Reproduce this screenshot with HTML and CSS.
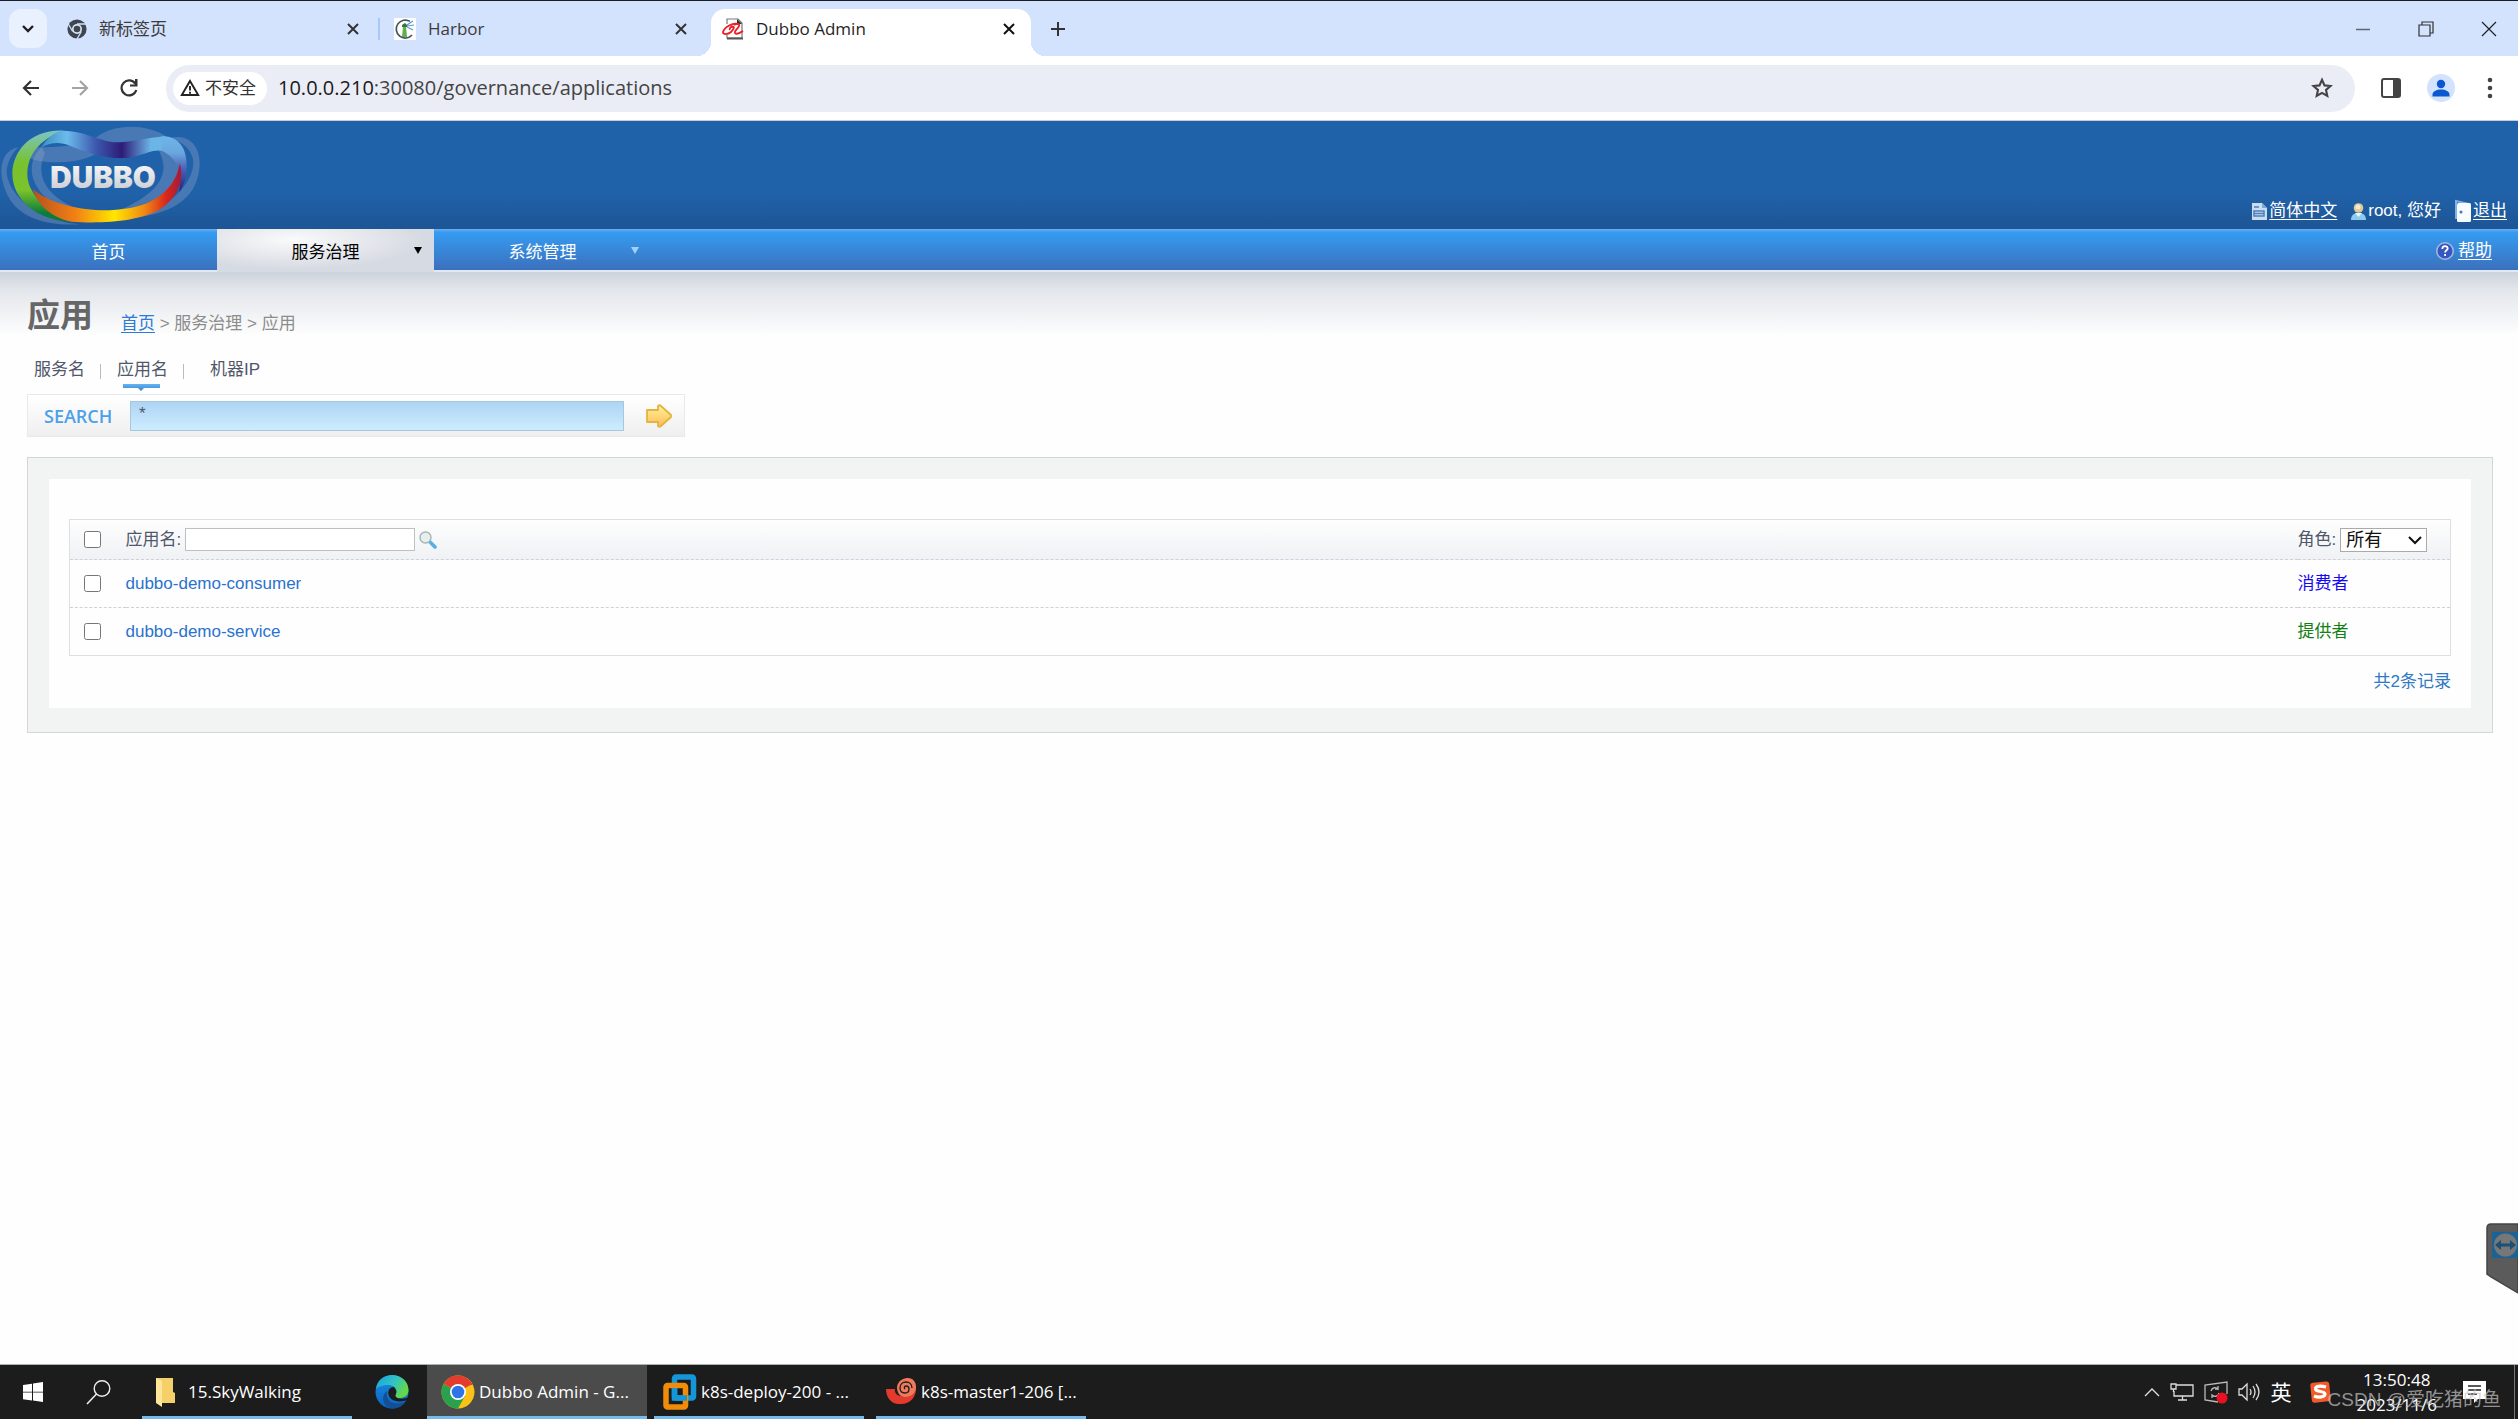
FILE: index.html
```html
<!DOCTYPE html>
<html lang="zh-CN">
<head>
    <meta charset="UTF-8">
    <title>Dubbo Admin</title>
    <link rel="stylesheet" href="styles.css">
</head>
<body>
<!-- 标签栏 -->
<div class="tabstrip">
    <button class="tab-search" aria-label="搜索标签页">
        <svg width="14" height="10" viewBox="0 0 14 10"><path d="M2 2l5 5 5-5" fill="none" stroke="#1f1f1f" stroke-width="2.4"/></svg>
    </button>
    <div class="tab tab-first">
        <svg class="favicon" width="20" height="20" viewBox="0 0 20 20">
            <circle cx="10" cy="10" r="9.6" fill="#3f464e"/>
            <circle cx="10" cy="10" r="5" fill="#d3e2fd"/>
            <circle cx="10" cy="10" r="3.3" fill="#3f464e"/>
            <path d="M10 5h9M5.7 12.5L1.3 5M14.3 12.5L10 20" stroke="#d3e2fd" stroke-width="1.3"/>
        </svg>
        <span class="tab-title">新标签页</span>
        <button class="icon-btn" aria-label="关闭"><svg width="12" height="12" viewBox="0 0 12 12"><path d="M1 1l10 10M11 1L1 11" stroke="#333" stroke-width="2"/></svg></button>
    </div>
    <div class="tab tab-second">
        <svg class="favicon" width="22" height="22" viewBox="0 0 22 22">
            <rect width="22" height="22" fill="#fff"/>
            <path d="M16 3.4A9 9 0 1 0 18 17" fill="none" stroke="#46535c" stroke-width="1.7"/>
            <path d="M8 19l1-11h3l1 11z" fill="#60b14b"/>
            <path d="M8 7l3-2 2 2v2H8z" fill="#39733a"/>
            <path d="M13 7l6-4M13 8l7-1M13 9l6 3" stroke="#5b9bd5" stroke-width="1.2"/>
        </svg>
        <span class="tab-title">Harbor</span>
        <button class="icon-btn" aria-label="关闭"><svg width="12" height="12" viewBox="0 0 12 12"><path d="M1 1l10 10M11 1L1 11" stroke="#333" stroke-width="2"/></svg></button>
    </div>
    <div class="tab tab-active">
        <svg class="favicon" width="22" height="22" viewBox="0 0 22 22">
            <path d="M5 6V1h11l4 4v15H5v-3" fill="#fff" stroke="#777" stroke-width="1.2"/>
            <path d="M15 1v5h5" fill="#333"/>
            <path d="M5 20.5h16" stroke="#555" stroke-width="2"/>
            <path d="M17 6C10 4 2 10 1 14c-.5 3 5 2.500 8 0 2-2 4-5 2-5.500-2 0-4 2-3 3.500" fill="none" stroke="#ee1c25" stroke-width="1.8"/>
            <path d="M12 7c4-2 6-1 5 1-1 3-5 5-4 7 1 1.500 5 0 8-2" fill="none" stroke="#ee1c25" stroke-width="1.8"/>
        </svg>
        <span class="tab-title">Dubbo Admin</span>
        <button class="icon-btn" aria-label="关闭"><svg width="12" height="12" viewBox="0 0 12 12"><path d="M1 1l10 10M11 1L1 11" stroke="#111" stroke-width="2"/></svg></button>
    </div>
    <button class="icon-btn new-tab" aria-label="新建标签页"><svg width="14" height="14" viewBox="0 0 14 14"><path d="M7 0v14M0 7h14" stroke="#333" stroke-width="2"/></svg></button>
    <div class="win-ctrl">
        <button class="icon-btn" aria-label="最小化"><svg width="16" height="16" viewBox="0 0 16 16"><path d="M1 8.5h14" stroke="#5f6670" stroke-width="1.5"/></svg></button>
        <button class="icon-btn" aria-label="还原"><svg width="16" height="16" viewBox="0 0 16 16"><path d="M1 4h11v11H1zM4 4V1h11v11h-3" fill="none" stroke="#333" stroke-width="1.2"/></svg></button>
        <button class="icon-btn" aria-label="关闭窗口"><svg width="16" height="16" viewBox="0 0 16 16"><path d="M1 1l14 14M15 1L1 15" stroke="#222" stroke-width="1.2"/></svg></button>
    </div>
</div>

<!-- 地址栏 -->
<div class="toolbar">
    <button class="icon-btn" aria-label="后退"><svg width="18" height="16" viewBox="0 0 18 16"><path d="M17 8H2M9 1L2 8l7 7" fill="none" stroke="#333" stroke-width="2.2"/></svg></button>
    <button class="icon-btn" aria-label="前进"><svg width="18" height="16" viewBox="0 0 18 16"><path d="M1 8h15M9 1l7 7-7 7" fill="none" stroke="#a3a3a3" stroke-width="2.2"/></svg></button>
    <button class="icon-btn" aria-label="刷新"><svg width="18" height="18" viewBox="0 0 18 18"><path d="M15.5 5A7.5 7.5 0 1 0 16.3 11" fill="none" stroke="#333" stroke-width="2.2"/><path d="M17.5 0v7.500H10V5.500h5V0z" fill="#333"/></svg></button>
    <div class="omnibox">
        <button class="site-chip">
            <svg width="20" height="18" viewBox="0 0 20 18"><path d="M10 2L18.2 16H1.800z" fill="none" stroke="#222" stroke-width="1.9"/><path d="M10 7v4.500M10 12.700v2" stroke="#222" stroke-width="1.9"/></svg>
            不安全
        </button>
        <div class="url"><span class="host">10.0.0.210</span>:30080/governance/applications</div>
        <button class="icon-btn" aria-label="收藏"><svg width="22" height="22" viewBox="0 0 22 22"><path d="M11 2.800l2.500 5.600 6 .6-4.500 4 1.300 6L11 15.900 5.700 19 7 13 2.500 9l6-.6z" fill="none" stroke="#444" stroke-width="2.1"/></svg></button>
    </div>
    <button class="icon-btn" aria-label="侧边栏"><svg width="20" height="20" viewBox="0 0 20 20"><rect x="1" y="1" width="18" height="18" rx="2" fill="#fff" stroke="#444" stroke-width="2"/><path d="M12 1h7v18h-7z" fill="#444"/></svg></button>
    <button class="icon-btn" aria-label="用户"><svg width="28" height="28" viewBox="0 0 28 28"><circle cx="14" cy="14" r="14" fill="#d3e2fd"/><circle cx="14" cy="10" r="4.2" fill="#0b57d0"/><path d="M5.500 22.500v-2c0-3 4-5 8.500-5s8.500 2 8.500 5v2z" fill="#0b57d0"/></svg></button>
    <button class="icon-btn more" aria-label="更多"><svg width="6" height="22" viewBox="0 0 6 22"><g fill="#444"><circle cx="3" cy="3" r="2.3"/><circle cx="3" cy="11" r="2.3"/><circle cx="3" cy="19" r="2.3"/></g></svg></button>
</div>

<!-- 页头 -->
<header class="header">
    <svg class="logo" width="200" height="108" viewBox="0 33 600 324" role="img" aria-label="DUBBO">
        <defs>
            <linearGradient id="green" x1="0" y1="0" x2="0" y2="1"><stop offset="0" stop-color="#7cc4c8"/><stop offset=".35" stop-color="#78c22e"/><stop offset=".65" stop-color="#7cc32c"/><stop offset=".9" stop-color="#0d7c3b"/></linearGradient>
            <linearGradient id="blue" x1="0" y1="0" x2="1" y2="0"><stop offset="0" stop-color="#3a8cc0"/><stop offset=".2" stop-color="#6cbbec"/><stop offset=".42" stop-color="#3c59ae"/><stop offset=".62" stop-color="#2d1c78"/><stop offset=".84" stop-color="#6bb4e6"/><stop offset="1" stop-color="#6db6e8"/></linearGradient>
            <linearGradient id="warm" x1="0" y1="0" x2="1" y2="0"><stop offset="0" stop-color="#b8501e"/><stop offset=".28" stop-color="#f07f14"/><stop offset=".55" stop-color="#ffe600"/><stop offset=".75" stop-color="#f08a14"/><stop offset=".9" stop-color="#d9261c"/><stop offset="1" stop-color="#a01c3a"/></linearGradient>
            <linearGradient id="silver" x1="0" y1="0" x2="0" y2="1"><stop offset="0" stop-color="#fff"/><stop offset="1" stop-color="#c4c6ca"/></linearGradient>
            <linearGradient id="tail" x1="0" y1="0" x2="0" y2="1"><stop offset="0" stop-color="#6db6e8"/><stop offset=".3" stop-color="#6aa6de"/><stop offset=".6" stop-color="#4a5fb4"/><stop offset="1" stop-color="#2c1c78"/></linearGradient>
        </defs>
        <g fill="#8fa3cb" fill-opacity=".36">
            <path d="M55 112C5 120-10 180 18 245 48 320 130 348 240 343 130 335 30 270 20 190 20 160 35 130 55 112z"/>
            <path d="M85 112C150 112 220 115 290 82 340 40 440 40 500 80 430 110 330 100 280 136 220 165 120 160 90 145z"/>
            <path d="M510 84C560 72 600 100 599 165 594 250 540 310 390 325 490 300 570 240 580 165 582 130 560 100 510 84z"/>
            <path d="M470 110C500 160 520 230 360 300 480 280 540 230 540 160 535 125 510 110 470 110z"/>
            <path d="M125 112C80 150 75 240 190 298L240 300C120 255 110 180 135 130z"/>
        </g>
        <path d="M190 62C90 58 38 125 37 190 37 270 110 332 220 336 150 305 84 260 82 195 82 135 115 90 190 62z" fill="url(#green)"/>
        <path d="M190 62C160 64 140 88 122 114 150 96 180 94 210 107 260 128 320 150 390 143 430 136 460 114 495 124L515 88C505 80 495 78 480 80 430 85 390 98 340 97 290 90 250 62 190 62z" fill="url(#blue)"/>
        <path d="M485 79C530 76 562 110 560 170 560 205 552 225 538 246 545 190 535 145 485 122z" fill="url(#tail)"/>
        <path d="M98 236C150 284 260 305 340 300 430 295 520 262 540 160 552 215 535 262 480 298 420 335 300 342 215 335 150 322 110 280 98 236z" fill="url(#warm)"/>
        <text x="151" y="234" class="logo-text" fill="url(#silver)">DUBBO</text>
    </svg>
    <div class="user-links">
        <a href="#"><svg width="17" height="19" viewBox="0 0 17 19"><path d="M1 1h10l5 5v12H1z" fill="#c8dcf2"/><path d="M11 1v5h5" fill="#7ea6d4"/><path d="M3 5h5M3 9h10v5H3zM3 11.500h10" fill="none" stroke="#4c7fb9" stroke-width="1.5"/></svg><span class="underline">简体中文</span></a>
        <span class="user"><svg width="17" height="19" viewBox="0 0 17 19"><path d="M1 18c0-6 4-7 7.500-7s7.500 1 7.500 7z" fill="#8ccbee"/><path d="M5 11l3.500 4 3.500-4z" fill="#e7f6fd"/><circle cx="8.5" cy="6" r="4.8" fill="#dfc89a"/><circle cx="8" cy="5" r="2.5" fill="#f5ead0"/></svg>root, 您好</span>
        <a href="#"><svg width="18" height="24" viewBox="0 0 18 24"><path d="M2 20V2l13 3" fill="none" stroke="#7fb3e6" stroke-width="2"/><rect x="3" y="4" width="14" height="19" rx="1.5" fill="#f8fbff"/><circle cx="7" cy="13" r="1.5" fill="#3f7cc0"/></svg><span class="underline">退出</span></a>
    </div>
</header>

<nav class="nav">
    <a class="nav-item" href="#">首页</a>
    <a class="nav-item current" href="#">服务治理<i class="caret"></i></a>
    <a class="nav-item" href="#">系统管理<i class="caret"></i></a>
    <a class="help" href="#"><svg width="18" height="18" viewBox="0 0 18 18"><circle cx="9" cy="9" r="8.2" fill="#3458c0" stroke="#a9b8d8" stroke-width="1.5"/><path d="M6.300 7c0-4 5.600-3.600 5.400-.5-.1 1.800-2.600 1.900-2.600 4M9.100 12v2" fill="none" stroke="#fff" stroke-width="1.8"/></svg><span class="underline">帮助</span></a>
</nav>

<main class="content">
    <div class="heading">
        <h1>应用</h1>
        <div class="crumbs"><a href="#">首页</a> &gt; 服务治理 &gt; 应用</div>
    </div>
    <div class="subtabs">
        <a href="#">服务名</a>
        <a class="on" href="#">应用名</a>
        <a href="#">机器IP</a>
    </div>
    <form class="search">
        <label for="keyword">SEARCH</label>
        <input id="keyword" type="text" value="*">
        <button type="button" class="icon-btn" aria-label="搜索">
            <svg width="28" height="24" viewBox="0 0 28 24">
                <defs><linearGradient id="gold" x1="0" y1="0" x2="0" y2="1"><stop offset="0" stop-color="#fff0a0"/><stop offset=".6" stop-color="#ffd36e"/><stop offset="1" stop-color="#ffb070"/></linearGradient></defs>
                <path d="M2 6h11V2c1-1 2-1 3 0l10 9v2l-10 9c-1 1-2 1-3 0v-4H2z" fill="url(#gold)" stroke="#e0b540" stroke-width="1.8" stroke-linejoin="round"/>
            </svg>
        </button>
    </form>

    <section class="panel">
        <div class="panel-inner">
            <table class="list">
                <thead>
                <tr>
                    <th class="check"><input type="checkbox" aria-label="全选"></th>
                    <th>
                        <div class="filter">
                            <label for="appName">应用名:</label>
                            <input id="appName" type="text">
                            <svg class="glass" width="18" height="18" viewBox="0 0 18 18"><path d="M11 11l5 5" stroke="#58aee6" stroke-width="3.6" stroke-linecap="round"/><circle cx="6.5" cy="6.5" r="5.5" fill="#e5efec" stroke="#a9b3b3" stroke-width="1.4"/></svg>
                        </div>
                    </th>
                    <th class="role">
                        <div class="filter">
                            <label for="role">角色:</label>
                            <span class="select-box">
                                <select id="role"><option>所有</option><option>消费者</option><option>提供者</option></select>
                                <svg class="arrow" width="14" height="10" viewBox="0 0 14 10"><path d="M1 2l6 6 6-6" fill="none" stroke="#111" stroke-width="2"/></svg>
                            </span>
                        </div>
                    </th>
                </tr>
                </thead>
                <tbody>
                <tr>
                    <td class="check"><input type="checkbox" aria-label="dubbo-demo-consumer"></td>
                    <td><a href="#">dubbo-demo-consumer</a></td>
                    <td class="consumer">消费者</td>
                </tr>
                <tr>
                    <td class="check"><input type="checkbox" aria-label="dubbo-demo-service"></td>
                    <td><a href="#">dubbo-demo-service</a></td>
                    <td class="provider">提供者</td>
                </tr>
                </tbody>
            </table>
            <p class="total">共2条记录</p>
        </div>
    </section>
</main>

<!-- 右侧悬浮 -->
<div class="dock">
    <svg width="32" height="72" viewBox="0 0 32 72">
        <path d="M32 1H5Q1 1 1 5v46l4 3 27 16z" fill="#5b5b5b" stroke="#444" stroke-width="1.5"/>
        <rect x="6" y="9" width="27" height="26" fill="#1b6396"/>
        <circle cx="19.5" cy="22" r="11.5" fill="#777"/>
        <path d="M9 22l6-5v3.500h9V17l6 5-6 5v-3.500h-9V27z" fill="#1d5077"/>
    </svg>
</div>

<!-- 任务栏 -->
<footer class="taskbar">
    <button class="task task-start" aria-label="开始"><svg width="20" height="20" viewBox="0 0 20 20"><path d="M0 3l9-1.300v8H0zM10 1.500L20 0v9.700H10zM0 10.500h9v8L0 17.200zM10 10.500h10V20l-10-1.500z" fill="#fff"/></svg></button>
    <button class="task task-find" aria-label="搜索"><svg width="26" height="26" viewBox="0 0 26 26"><circle cx="16" cy="9.5" r="7.8" fill="none" stroke="#eee" stroke-width="1.4"/><path d="M10.500 15L1 25" stroke="#eee" stroke-width="1.6"/></svg></button>
    <button class="task task-app running folder">
        <svg width="20" height="30" viewBox="0 0 20 30"><path d="M0 1h17v14l2 1v10H0z" fill="#f5cf68"/><path d="M0 1l6 3v26l-6-4z" fill="#ffe69a"/></svg>
        15.SkyWalking
    </button>
    <button class="task task-edge" aria-label="Microsoft Edge">
        <svg width="34" height="36" viewBox="0 0 34 36">
            <defs>
                <linearGradient id="edgeTop" x1="0" y1="0" x2="1" y2=".5"><stop offset="0" stop-color="#1ba0e0"/><stop offset=".55" stop-color="#2fc3c6"/><stop offset="1" stop-color="#65d944"/></linearGradient>
                <linearGradient id="edgeLeft" x1="0" y1="0" x2="0" y2="1"><stop offset="0" stop-color="#1b8fdf"/><stop offset="1" stop-color="#0b62c2"/></linearGradient>
            </defs>
            <circle cx="17" cy="18" r="16.5" fill="url(#edgeLeft)"/>
            <path d="M1 15C2 6 9 1 17 1c10 0 16.500 7 16.500 15 0 6-5 8-9 8-5 0-6-2-4-4 3-4-1-9-7-9-6 0-11 2-12.500 4z" fill="url(#edgeTop)"/>
            <path d="M12 17c-2 10 7 16 19 10-3 5-8 7.500-13 7.500C8 34 5 22 12 17z" fill="#124f93"/>
            <path d="M19 13c-5 0-7 5-5 9 2 5 10 7 18 4l2-3c-5 3-16 2-13-3 1-2 0-5-2-7z" fill="#1c1c1c"/>
        </svg>
    </button>
    <button class="task task-app running active">
        <svg width="34" height="34" viewBox="0 0 34 34">
            <circle cx="17" cy="17" r="16.5" fill="#fbc116"/>
            <path d="M17 17L2.700 8.700A16.500 16.500 0 0 0 17 33.500L24 21z" fill="#2aa14c"/>
            <path d="M17 17L2.700 8.700A16.500 16.500 0 0 1 31.300 9z" fill="#e33b2e"/>
            <path d="M17 9h14.300v1H17z" fill="#e33b2e"/>
            <circle cx="17" cy="17" r="8" fill="#fff"/><circle cx="17" cy="17" r="6.3" fill="#2f73e8"/>
        </svg>
        Dubbo Admin - G...
    </button>
    <button class="task task-app running">
        <svg width="34" height="36" viewBox="0 0 34 36"><g fill="none" stroke-width="5.5"><rect x="11.5" y="3" width="19" height="21" rx="1.5" stroke="#1397d8"/><rect x="3" y="11.5" width="19.5" height="21.5" rx="1.5" stroke="#f08c0a"/><path d="M11.500 14v10H24" stroke="#1397d8"/></g></svg>
        k8s-deploy-200 - ...
    </button>
    <button class="task task-app running">
        <svg width="32" height="30" viewBox="0 0 32 30">
            <path d="M1 12h9c-1 5 4 8 9 7 5-1 8-4 8-8l4-2c1 11-6 18-15 18C7 28 1 21 1 12z" fill="#e43a2e"/>
            <path d="M12 10C13 3 19 1 23 1c5 0 8 4 8 9 0 6-5 10-11 10-5 0-8-4-8-10z" fill="#ee7a5c"/>
            <path d="M27 11c0-4-3-6-6-6s-6 2-6 6c0 3 2 5 5 5s4-2 4-4-1-3-3-3-2 2-1 3" fill="none" stroke="#1c1c1c" stroke-width="1.3"/>
        </svg>
        k8s-master1-206 [...
    </button>
    <div class="tray">
        <svg width="16" height="12" viewBox="0 0 16 12"><path d="M1 10l7-7 7 7" fill="none" stroke="#ddd" stroke-width="1.4"/></svg>
        <svg width="24" height="18" viewBox="0 0 24 18"><path d="M6 2h17v11H4V8M8 17h9M12.500 13v4" fill="none" stroke="#ddd" stroke-width="1.3"/><path d="M1 1h5v5H1zM3.500 6v3" fill="none" stroke="#ddd" stroke-width="1.3"/></svg>
        <svg width="24" height="24" viewBox="0 0 24 24"><path d="M14 22L1 20V5l22-3v12" fill="none" stroke="#bbb" stroke-width="1.3"/><path d="M7 11c1-4 5-4 7-2V6M14 9h-3M15 13c-1 4-5 4-7 2v3" fill="none" stroke="#bbb" stroke-width="1.3"/><circle cx="18" cy="18" r="5.5" fill="#e81123"/></svg>
        <svg width="22" height="20" viewBox="0 0 22 20"><path d="M1 7h3l5-5v16l-5-5H1zM12 7q2 3 0 6M15 4q4 6 0 12M18 2q6 8 0 16" fill="none" stroke="#ddd" stroke-width="1.3"/></svg>
        <span class="ime">英</span>
        <svg class="sogou" width="22" height="22" viewBox="0 0 22 22"><rect x="1" y="1" width="19" height="20" rx="3" fill="#f15a29" transform="rotate(-6 11 11)"/><path d="M16 6C8 4 4 6 6 9c2 2 9 1 9 4 0 3-6 4-11 2" fill="none" stroke="#fff" stroke-width="3.2"/></svg>
        <div class="clock"><div>13:50:48</div><div>2023/11/6</div></div>
        <svg class="notice" width="24" height="24" viewBox="0 0 24 24"><path d="M0 1h23v18h-8l-4 4v-4H0z" fill="#fff"/><path d="M5 6h13M5 10h13M5 14h9" stroke="#222" stroke-width="1.5"/></svg>
        <div class="watermark">CSDN @爱吃猪的鱼</div>
    </div>
</footer>
</body>
</html>
```
FILE: styles.css
```css
* {
    margin: 0;
    padding: 0;
    box-sizing: border-box;
}

body {
    min-height: 100vh;
    display: flex;
    flex-direction: column;
    border-top: 1px solid #1c1c22;
    background-color: #fefefe;
    font-family: "Liberation Sans", "Noto Sans CJK SC", sans-serif;
    font-size: 17px;
    line-height: 24px;
    color: #50576a;
}

svg {
    display: block;
    flex: none;
}

button, input, select {
    font: inherit;
    color: inherit;
}

button {
    border: none;
    background: none;
}

.underline {
    text-decoration: underline;
    text-underline-offset: 3px;
}

.icon-btn {
    display: flex;
    align-items: center;
    justify-content: center;
    flex: none;
}

/*标签栏*/
.tabstrip, .toolbar, .taskbar {
    font-family: "Open Sans", "Noto Sans CJK SC", sans-serif;
}
.tabstrip {
    display: flex;
    height: 55px;
    padding: 8px 21px 0 9px;
    background-color: #d3e2fd;
    color: #3c3c3c;
}
.tab-search {
    display: flex;
    align-items: center;
    justify-content: center;
    width: 38px;
    height: 39px;
    border-radius: 12px;
    background-color: #e9f0fe;
}
.tab {
    display: flex;
    align-items: center;
    height: 39px;
}
.tab-title {
    flex: 1;
    margin-left: 12px;
}
.tab-first {
    width: 333px;
    height: 22px;
    margin-top: 9px;
    padding: 0 19px 0 20px;
    border-right: 2px solid #a8c7fa;
}
.tab-second {
    width: 331px;
    padding: 0 24px 0 14px;
}
.tab-active {
    position: relative;
    width: 320px;
    height: 47px;
    padding: 0 16px 8px 11px;
    border-radius: 14px 14px 0 0;
    background-color: #fff;
    color: #1f1f1f;
}
.tab-active::before, .tab-active::after {
    content: "";
    position: absolute;
    bottom: 0;
    width: 14px;
    height: 14px;
}
.tab-active::before {
    left: -14px;
    background: radial-gradient(circle at 0 0, transparent 14px, #fff 14px);
}
.tab-active::after {
    right: -14px;
    background: radial-gradient(circle at 100% 0, transparent 14px, #fff 14px);
}
.new-tab {
    width: 54px;
    height: 39px;
}
.win-ctrl {
    display: flex;
    align-items: center;
    gap: 47px;
    height: 39px;
    margin-left: auto;
}

/*地址栏*/
.toolbar {
    display: flex;
    align-items: center;
    gap: 26px;
    height: 65px;
    padding: 0 19px;
    background-color: #fff;
    border-bottom: 1px solid #c9ccd4;
}
.toolbar > .icon-btn:nth-child(-n+3) {
    width: 23px;
}
.toolbar .more {
    width: 18px;
}
.omnibox {
    display: flex;
    align-items: center;
    flex: 1;
    height: 47px;
    padding: 0 22px 0 7px;
    border-radius: 24px;
    background-color: #eaedf6;
    color: #444;
}
.site-chip {
    display: flex;
    align-items: center;
    gap: 5px;
    height: 33px;
    padding: 0 11px 0 7px;
    border-radius: 17px;
    background-color: #fff;
    color: #333;
}
.url {
    flex: 1;
    margin-left: 11px;
    font-size: 20px;
}
.host {
    color: #1a1a1a;
}

/*页头*/
.header {
    display: flex;
    justify-content: space-between;
    align-items: flex-end;
    height: 108px;
    padding-right: 11px;
    background: linear-gradient(#2062aa 65%, #1d5595);
    color: #fff;
}
.logo-text {
    font-family: Inter, sans-serif;
    font-size: 89px;
    font-weight: 900;
}
.user-links {
    display: flex;
    gap: 13px;
    padding-bottom: 6px;
}
.user-links a, .user, .help {
    display: flex;
    align-items: center;
    gap: 1px;
    color: #fff;
    text-decoration: none;
}

/*导航*/
.nav {
    display: flex;
    height: 43px;
    border-bottom: 2px solid #e0e9f5;
    background: linear-gradient(#68aef2, #4fa2f0 2px, #359cf2 3px, #3b70bd);
}
.nav-item {
    position: relative;
    width: 217px;
    padding-top: 12px;
    text-align: center;
    color: #fff;
    text-decoration: none;
}
.current {
    height: 43px;
    background: radial-gradient(ellipse at 35% 25%, #fafafb, #d6dae2 65%);
    color: #000;
}
.caret {
    position: absolute;
    top: 18px;
    right: 12px;
    border: 4px solid transparent;
    border-top: 7px solid #9ed2fb;
    border-bottom: none;
}
.current .caret {
    border-top-color: #000;
}
.help {
    gap: 4px;
    margin-left: auto;
    padding: 2px 26px 0 0;
}

/*内容*/
.content {
    flex: 1;
    padding: 20px 25px 40px 27px;
    background: linear-gradient(#cdd3db, #e3e6eb 18px, #fefefe 64px);
}
.heading {
    display: flex;
    align-items: flex-end;
    gap: 28px;
}
h1 {
    font-size: 33px;
    line-height: 48px;
    color: #666;
}
.crumbs {
    padding-bottom: 4px;
    color: #8c8c8c;
}
.crumbs a {
    color: #2d7bd4;
    text-underline-offset: 3px;
}
.subtabs {
    display: flex;
    margin-top: 18px;
    padding-left: 7px;
}
.subtabs a {
    position: relative;
    padding-right: 32px;
    color: #50576a;
    text-decoration: none;
}
.subtabs a:last-child {
    padding-left: 10px;
}
.subtabs a:not(:last-child)::before {
    content: "";
    position: absolute;
    top: 6px;
    right: 16px;
    width: 1px;
    height: 15px;
    background-color: #bbb;
}
.subtabs .on::after {
    content: "";
    position: absolute;
    left: 6px;
    top: 26px;
    width: 37px;
    height: 7px;
    background: linear-gradient(#64b5f5, #3582c8);
    clip-path: polygon(0 0, 100% 0, 100% 4px, 21px 4px, 18px 7px, 15px 4px, 0 4px);
}
.search {
    display: flex;
    align-items: center;
    width: 658px;
    height: 43px;
    margin-top: 12px;
    padding: 0 11px 0 16px;
    border: 1px solid #e6eaef;
    background: linear-gradient(#fff, #efefef);
}
.search label {
    width: 86px;
    font-family: "Open Sans", sans-serif;
    font-size: 18px;
    font-weight: 600;
    color: #4da0ea;
}
.search input {
    flex: 1;
    min-width: 0;
    height: 30px;
    margin-right: 21px;
    padding: 0 8px 4px;
    border: 1px solid #a5c8dd;
    background: linear-gradient(#aed4f5, #cdedfe);
}

/*列表*/
.panel {
    margin-top: 20px;
    padding: 21px 21px 24px;
    border: 1px solid #d3d5d6;
    background-color: #f1f4f3;
}
.panel-inner {
    padding: 40px 20px 14px;
    background-color: #fefefe;
}
.list {
    width: 100%;
    border: 1px solid #dedfe1;
    border-collapse: collapse;
    table-layout: fixed;
}
.list th {
    height: 40px;
    font-weight: normal;
    text-align: left;
}
.list thead {
    background: linear-gradient(#fefefe, #eff1f4);
}
.list td {
    height: 48px;
    border-top: 1px dashed #cfd2d4;
}
.list a {
    color: #2a72cf;
    text-decoration: none;
}
.list .check {
    width: 56px;
    padding-left: 14px;
}
.list .check input {
    display: block;
    width: 17px;
    height: 17px;
}
.list .role {
    width: 153px;
}
.filter {
    display: flex;
    align-items: center;
    gap: 4px;
}
.filter input {
    width: 230px;
    height: 23px;
    border: 1px solid #bdbfc1;
    background-color: #fff;
}
.select-box {
    position: relative;
}
.select-box select {
    display: block;
    width: 87px;
    height: 24px;
    padding-left: 5px;
    border: 1px solid #aaa;
    background-color: #fff;
    font-size: 18px;
    line-height: 22px;
    color: #111;
    appearance: none;
}
.select-box .arrow {
    position: absolute;
    top: 7px;
    right: 5px;
    pointer-events: none;
}
.consumer {
    color: #1508f5;
}
.provider {
    color: #138013;
}
.total {
    margin-top: 14px;
    text-align: right;
    color: #3079c4;
}

.dock {
    position: fixed;
    right: 0;
    bottom: 124px;
}

/*任务栏*/
.taskbar {
    display: flex;
    height: 55px;
    border-top: 1px solid #a7b3ae;
    background-color: #1c1c1c;
    color: #fff;
}
.task {
    display: flex;
    align-items: center;
    justify-content: center;
    padding-top: 2px;
    border-bottom: 3px solid transparent;
    white-space: nowrap;
}
.task-start {
    width: 66px;
}
.task-find {
    width: 66px;
}
.task-app {
    justify-content: flex-start;
    gap: 4px;
    width: 210px;
    margin-right: 12px;
    padding-left: 9px;
}
.folder {
    gap: 12px;
    margin: 0 0 0 10px;
    padding-left: 14px;
}
.task-edge {
    width: 75px;
    padding-left: 5px;
}
.running {
    border-bottom-color: #76b9ed;
}
.active {
    width: 220px;
    margin-right: 7px;
    padding-left: 14px;
    background-color: #4b4b4b;
}
.tray {
    position: relative;
    display: flex;
    align-items: center;
    gap: 10px;
    margin: 0 3px 0 auto;
    padding-right: 27px;
    border-right: 1px solid #777;
}
.ime {
    font-size: 21px;
}
.sogou {
    margin-left: 9px;
}
.clock {
    margin: 0 16px 0 14px;
    text-align: center;
    line-height: 25px;
}
.watermark {
    position: absolute;
    right: 13px;
    bottom: 7px;
    font-family: "Liberation Sans", "Noto Sans CJK SC", sans-serif;
    font-size: 19px;
    white-space: nowrap;
    color: rgba(200, 200, 200, 0.7);
}
```
